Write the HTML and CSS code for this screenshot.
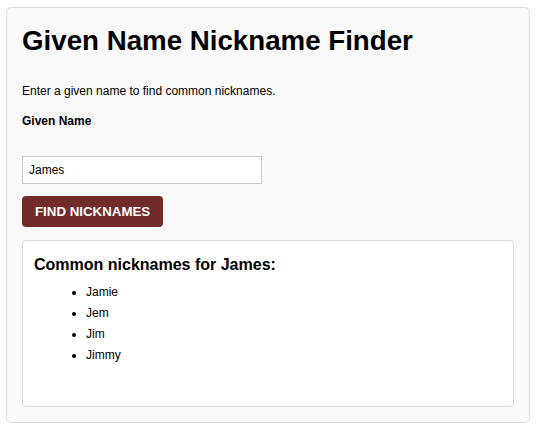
FILE: index.html
```html
<!DOCTYPE html>
<html lang="en">
<head>
<meta charset="utf-8">
<title>Given Name Nickname Finder</title>
<link rel="stylesheet" href="styles.css">
</head>
<body>
<div class="card">
  <h1 class="title">Given Name Nickname Finder</h1>
  <p class="intro">Enter a given name to find common nicknames.</p>
  <label class="label" for="name">Given Name</label>
  <input class="input" id="name" type="text" value="James">
  <button class="btn" type="button">Find Nicknames</button>
  <div class="results">
    <h2 class="results-title">Common nicknames for James:</h2>
    <ul class="list">
      <li>Jamie</li>
      <li>Jem</li>
      <li>Jim</li>
      <li>Jimmy</li>
    </ul>
  </div>
</div>
</body>
</html>
```
FILE: styles.css
```css
html, body {
  margin: 0;
  padding: 0;
  background: #ffffff;
}
body {
  padding: 7px 8px 8px 6px;
  font-family: "Liberation Sans", Arial, sans-serif;
  color: #000;
}
.card {
  background: #f9f9f9;
  border: 1px solid #dddddd;
  border-radius: 5px;
  padding: 15px;
  display: flex;
  flex-direction: column;
  align-items: flex-start;
}
.title {
  font-size: 27.7px;
  font-weight: bold;
  margin: 0 0 25px 0;
  line-height: 1.3;
}
.intro {
  font-size: 12px;
  margin: 0 0 16px 0;
}
.label {
  font-size: 12px;
  font-weight: bold;
  margin: 0 0 28px 0;
}
.input {
  width: 240px;
  height: 28px;
  box-sizing: border-box;
  border: 1px solid #cccccc;
  background: #fff;
  font-family: "Liberation Sans", Arial, sans-serif;
  font-size: 12px;
  padding: 0 6px;
  margin: 0 0 12px 0;
  border-radius: 0;
}
.btn {
  background: #722b2b;
  color: #fff;
  border: none;
  border-radius: 4px;
  font-family: "Liberation Sans", Arial, sans-serif;
  font-size: 13.3px;
  font-weight: bold;
  text-transform: uppercase;
  padding: 0 13px;
  height: 31px;
  margin: 0 0 13px 0;
}
.results {
  align-self: stretch;
  background: #fff;
  border: 1px solid #dddddd;
  border-radius: 4px;
  padding: 14px 11px 40px 11px;
}
.results-title {
  font-size: 16px;
  font-weight: bold;
  margin: 0 0 8px 0;
  line-height: 1.2;
}
.list {
  margin: 0;
  padding-left: 52px;
  font-size: 12px;
}
.list li {
  line-height: 21px;
}
```
